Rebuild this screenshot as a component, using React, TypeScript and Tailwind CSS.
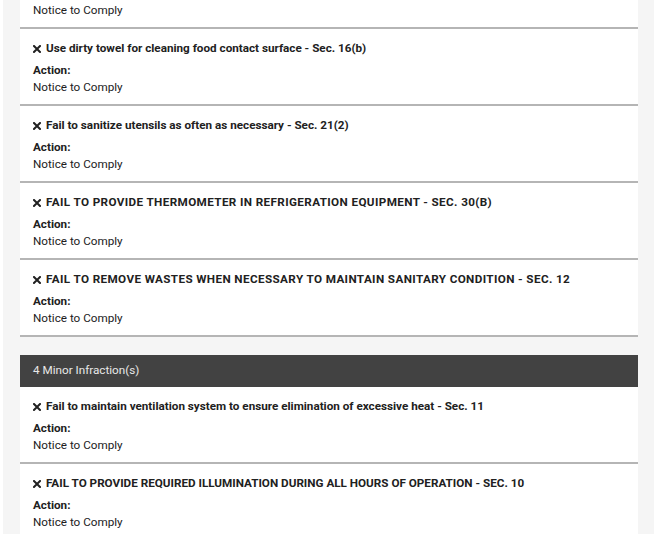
import React from "react";

type Infraction = { title: string; action: string; spaced?: boolean };

const major: Infraction[] = [
  { title: "Fail to keep food contact surfaces clean - Sec. 16(a)", action: "Notice to Comply" },
  { title: "Use dirty towel for cleaning food contact surface - Sec. 16(b)", action: "Notice to Comply" },
  { title: "Fail to sanitize utensils as often as necessary - Sec. 21(2)", action: "Notice to Comply" },
  { title: "FAIL TO PROVIDE THERMOMETER IN REFRIGERATION EQUIPMENT - SEC. 30(B)", action: "Notice to Comply", spaced: true },
  { title: "FAIL TO REMOVE WASTES WHEN NECESSARY TO MAINTAIN SANITARY CONDITION - SEC. 12", action: "Notice to Comply", spaced: true },
];

const minor: Infraction[] = [
  { title: "Fail to maintain ventilation system to ensure elimination of excessive heat - Sec. 11", action: "Notice to Comply" },
  { title: "FAIL TO PROVIDE REQUIRED ILLUMINATION DURING ALL HOURS OF OPERATION - SEC. 10", action: "Notice to Comply" },
];

function Cross() {
  return (
    <svg width="8" height="8" viewBox="0 0 8 8" className="shrink-0">
      <path d="M1 1 L7 7 M7 1 L1 7" stroke="#212121" strokeWidth="2" strokeLinecap="square" />
    </svg>
  );
}

function Item({ item, last }: { item: Infraction; last?: boolean }) {
  return (
    <div className={(last ? "" : "border-b-2 border-[#b5b5b5] ") + "bg-white px-[13px] pt-[11px] pb-[8px]"}>
      <div className="flex items-center gap-[5px] h-[17px] leading-[17px] font-bold whitespace-nowrap">
        <Cross />
        <span className={item.spaced ? "tracking-[0.38px]" : ""}>{item.title}</span>
      </div>
      <div className="mt-[5px] leading-[17px] font-bold">Action:</div>
      <div className="leading-[17px]">{item.action}</div>
    </div>
  );
}

export default function App() {
  return (
    <div
      className="h-[534px] overflow-hidden bg-white text-[11.7px] text-[#212121]"
      style={{ fontFamily: "Roboto, 'Noto Sans', sans-serif" }}
    >
      <div className="ml-[3px] mr-[6px] flow-root bg-[#f5f5f5] pl-[17px] pr-[16px] pb-[40px]">
        <div className="-mt-[48px]">
          <div className="bg-white">
            {major.map((m, i) => (
              <Item key={i} item={m} />
            ))}
          </div>
          <div className="mt-[18px] bg-white">
            <div className="flex h-[32px] items-center bg-[#424242] px-[13px] text-[#e8e8e8]">
              4 Minor Infraction(s)
            </div>
            {minor.map((m, i) => (
              <Item key={i} item={m} last={i === minor.length - 1} />
            ))}
          </div>
        </div>
      </div>
    </div>
  );
}
